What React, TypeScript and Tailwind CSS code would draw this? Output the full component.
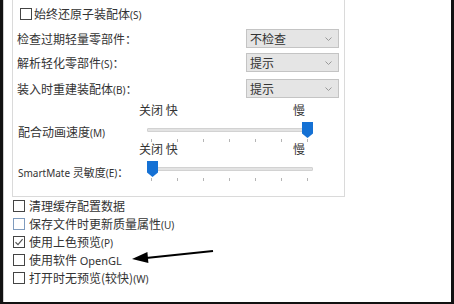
const font = "font-['Noto_Sans_CJK_SC','Noto_Sans',sans-serif]"

function Box({ checked = false, hover = false }: { checked?: boolean; hover?: boolean }) {
  return (
    <span
      className={`flex h-[12px] w-[12px] shrink-0 items-center justify-center border bg-white ${
        hover ? 'border-[#7f9bbd]' : 'border-[#444]'
      }`}
    >
      {checked && (
        <svg width="10" height="10" viewBox="0 0 10 10">
          <path d="M1.5 5.2 L4 7.6 L8.6 2.2" fill="none" stroke="#555" strokeWidth="1.2" />
        </svg>
      )}
    </span>
  )
}

function Key({ k }: { k: string }) {
  return <span className="text-[10px] font-['Noto_Sans',sans-serif]">({k})</span>
}

function Dropdown({ value }: { value: string }) {
  return (
    <div className="flex h-[19px] w-[93px] items-center justify-between border border-[#c4c4c4] bg-[#e5e5e5] pl-[3px] pr-[6px]">
      <span>{value}</span>
      <svg width="7" height="4" viewBox="0 0 7 4">
        <path d="M0.5 0.5 L3.5 3.5 L6.5 0.5" fill="none" stroke="#999" strokeWidth="1" />
      </svg>
    </div>
  )
}

function Slider({ label, pos, labelTop }: { label: React.ReactNode; pos: 'start' | 'end'; labelTop: string }) {
  return (
    <div className="flex">
      <div className={`w-[126px] shrink-0 pl-[5px] leading-[14px] ${labelTop}`}>{label}</div>
      <div className="flex flex-col">
        <div className="flex h-[14px] w-[166px] justify-between leading-[14px]">
          <span>关闭 快</span>
          <span>慢</span>
        </div>
        <div className="relative mt-[4px] ml-[8px] flex h-[18px] w-[166px] items-center">
          <div className="h-[4px] w-full rounded-[1px] border border-[#d2d2d2] bg-[#e3e3e3]" />
          <svg
            className={`absolute top-[1px] ${pos === 'end' ? 'right-0' : 'left-0'}`}
            width="11"
            height="16"
            viewBox="0 0 11 16"
          >
            <path d="M0 0 H11 V11.5 L5.5 16 L0 11.5 Z" fill="#1571d4" />
          </svg>
        </div>
        <div className="ml-[8px] flex h-[3px] w-[166px] justify-between pl-[4px] pr-[5px]">
          {[0, 1, 2, 3, 4, 5, 6].map((i) => (
            <span key={i} className="h-[3px] w-px bg-[#b5b5b5]" />
          ))}
        </div>
      </div>
    </div>
  )
}

const options = [
  { text: '清理缓存配置数据' },
  { text: '保存文件时更新质量属性', k: 'U', hover: true },
  { text: '使用上色预览', k: 'P', checked: true },
  { text: '使用软件 ', latin: 'OpenGL' },
  { text: '打开时无预览(较快)', k: 'W' },
]

export default function App() {
  return (
    <div className={`h-[304px] w-[454px] bg-[#121212] pl-[3px] pr-[3px] pb-[2px] ${font} text-[12px] text-[#333]`}>
      <div className="relative h-full border-l border-[#cfcfcf] bg-white">
        {/* group box, top edge scrolled out of view */}
        <div className="ml-[8px] flex h-[197px] w-[333px] flex-col border-x border-b border-[#dadada]">
          <div className="mt-[8px] flex h-[12px] items-center gap-[2px] pl-[7px] leading-[12px]">
            <Box />
            <span>
              始终还原子装配体<Key k="S" />
            </span>
          </div>

          <div className="mt-[9px] flex h-[19px] items-center justify-between pl-[4px] pr-[5px]">
            <span>检查过期轻量零部件：</span>
            <Dropdown value="不检查" />
          </div>
          <div className="mt-[5px] flex h-[19px] items-center justify-between pl-[4px] pr-[5px]">
            <span>
              解析轻化零部件<Key k="S" />：
            </span>
            <Dropdown value="提示" />
          </div>
          <div className="mt-[7px] flex h-[19px] items-center justify-between pl-[4px] pr-[5px]">
            <span>
              装入时重建装配体<Key k="B" />：
            </span>
            <Dropdown value="提示" />
          </div>

          <div className="mt-[5px]">
            <Slider
              labelTop="mt-[22px]"
              pos="end"
              label={
                <span>
                  配合动画速度<Key k="M" />
                </span>
              }
            />
          </div>
          <Slider
            labelTop="mt-[23px]"
            pos="start"
            label={
              <span className="text-[11px]">
                <span className="font-['Noto_Sans',sans-serif] text-[10px]">SmartMate </span>灵敏度<Key k="E" />：
              </span>
            }
          />
        </div>

        <div className="flex flex-col pl-[9px]">
          {options.map((o) => (
            <div key={o.text} className="flex h-[18px] items-center gap-[4px]">
              <Box checked={o.checked} hover={o.hover} />
              <span className="leading-[14px]">
                {o.text}
                {o.latin && <span className="font-['Noto_Sans',sans-serif] text-[11px]">{o.latin}</span>}
                {o.k && <Key k={o.k} />}
              </span>
            </div>
          ))}
        </div>

        {/* annotation arrow */}
        <svg className="absolute left-[124px] top-[245px]" width="95" height="24" viewBox="0 0 95 24">
          <line x1="85" y1="6" x2="18" y2="13" stroke="#000" strokeWidth="2" />
          <path d="M4 14 L20.4 17.9 L19.4 6.9 Z" fill="#000" />
        </svg>
      </div>
    </div>
  )
}
